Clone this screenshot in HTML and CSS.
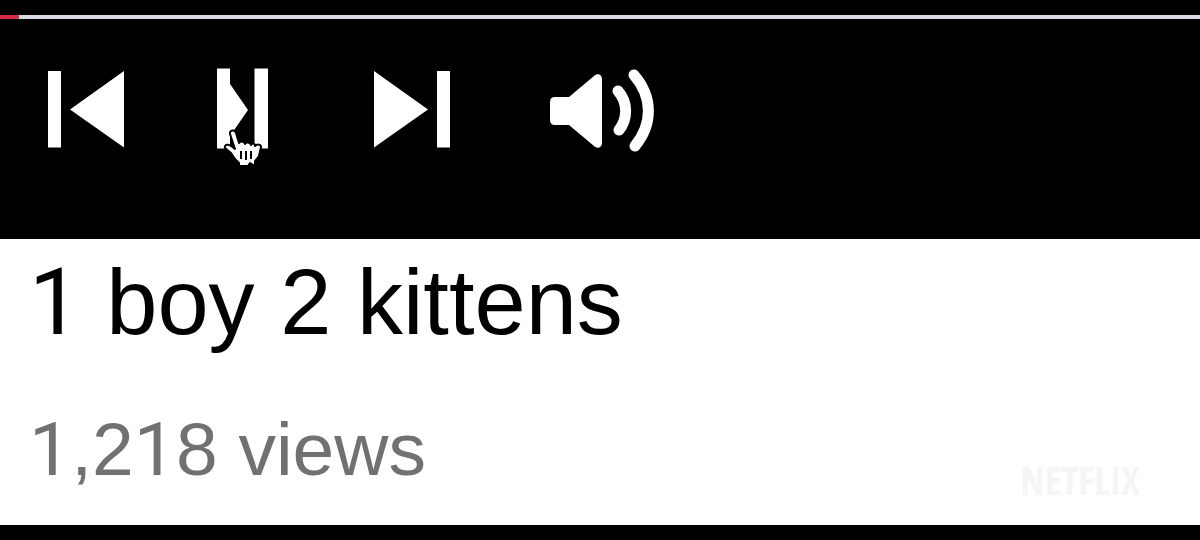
FILE: index.html
```html
<!DOCTYPE html>
<html lang="en">
<head>
  <meta charset="UTF-8">
  <meta name="viewport" content="width=device-width, initial-scale=1">
  <title>1 boy 2 kittens</title>
  <link rel="stylesheet" href="styles.css">
</head>
<body>

  <div class="player">
    <div class="progress">
      <div class="progress-played"></div>
    </div>

    <div class="controls">
      <button class="control" type="button" aria-label="Previous">
        <svg width="76" height="84" viewBox="0 0 76 84">
          <path d="M0 3H13V79.500H0ZM76 3V79.500L22 41.500Z"/>
        </svg>
      </button>

      <button class="control" type="button" aria-label="Pause">
        <svg width="76" height="84" viewBox="0 0 76 84">
          <path d="M6 .5H19V16L37 42L19 68V80.500H6ZM43.500 .5H57V80.500H43.500Z"/>
        </svg>
        <svg class="pointer" width="44" height="42" viewBox="0 0 44 42">
          <path class="hand" d="M10 6C9 2 15 1 16 5L19 15C20 13 24 13 25 16C26 14 30 14 31 17C32 15 35 15 35 18C37 16 41 16 41 19L39 28L35 33V38L30 35L28 38H19V35L15 31L11 25L5 20C4 16 9 16 11 18L15 21Z"/>
          <path class="fingers" d="M21 23V31M26 23V32M31 23V31"/>
        </svg>
      </button>

      <button class="control" type="button" aria-label="Next">
        <svg width="76" height="84" viewBox="0 0 76 84">
          <path d="M0 3V79.500L54 41.500ZM63 3H76V79.500H63Z"/>
        </svg>
      </button>

      <button class="control" type="button" aria-label="Volume">
        <svg width="117" height="84" viewBox="0 0 117 84">
          <path d="M18 29H32L57 8C60 5 65 6 65 11V75C65 80 60 81 57 78L32 57H18Q13 57 13 52V34Q13 29 18 29Z"/>
          <path class="wave" d="M81 23C91 34 91 51 82 62M97 7C116 29 116 56 98 78"/>
        </svg>
      </button>
    </div>
  </div>

  <div class="info">
    <h1 class="title"><span class="one">1</span> boy 2 kittens</h1>
    <div class="meta">
      <p class="views"><span class="one">1</span>,2<span class="one">1</span>8 views</p>
      <span class="brand">NETFLIX</span>
    </div>
  </div>

</body>
</html>
```

FILE: styles.css
```css
* {
  box-sizing: border-box;
}
body {
  margin: 0;
  min-height: 100vh;
  padding: 15px 0;
  display: flex;
  flex-direction: column;
  background-color: #000;
  font-family: "Liberation Sans", Arial, sans-serif;
}
.progress {
  height: 4px;
  background-color: #d9dae2;
}
.progress-played {
  width: 19px;
  height: 4px;
  background-color: #d52b48;
}
.controls {
  display: flex;
  flex-wrap: wrap;
  gap: 87px;
  padding: 49px 48px 87px;
}
.control {
  position: relative;
  padding: 0;
  border: none;
  background: none;
  cursor: pointer;
}
.control svg {
  display: block;
  fill: #fff;
}
.control .wave {
  fill: none;
  stroke: #fff;
  stroke-width: 11;
  stroke-linecap: round;
}
/* hand over the pause button */
.control .pointer {
  position: absolute;
  left: 9px;
  top: 60px;
}
.hand {
  stroke: #000;
  stroke-width: 2;
  stroke-linejoin: round;
}
.fingers {
  stroke: #000;
  stroke-width: 2;
}
.info {
  flex: 1;
  padding: 10px 60px 20px 29px;
  background-color: #fff;
}
.title {
  margin: 0 0 50px;
  font-size: 92px;
  line-height: 106px;
  font-weight: normal;
  color: #000;
}
/* plain figure one, without a foot */
.one {
  font-family: Roboto, sans-serif;
}
.meta {
  display: flex;
  justify-content: space-between;
  align-items: flex-end;
}
.views {
  margin: 0;
  font-size: 75px;
  line-height: 86px;
  color: #717073;
}
.brand {
  margin-bottom: -8px;
  font-family: "Liberation Sans Narrow", "Open Sans Condensed", "Roboto Condensed", "Liberation Sans", sans-serif;
  font-size: 39px;
  line-height: 40px;
  font-weight: bold;
  color: #f5f5f3;
}
```
